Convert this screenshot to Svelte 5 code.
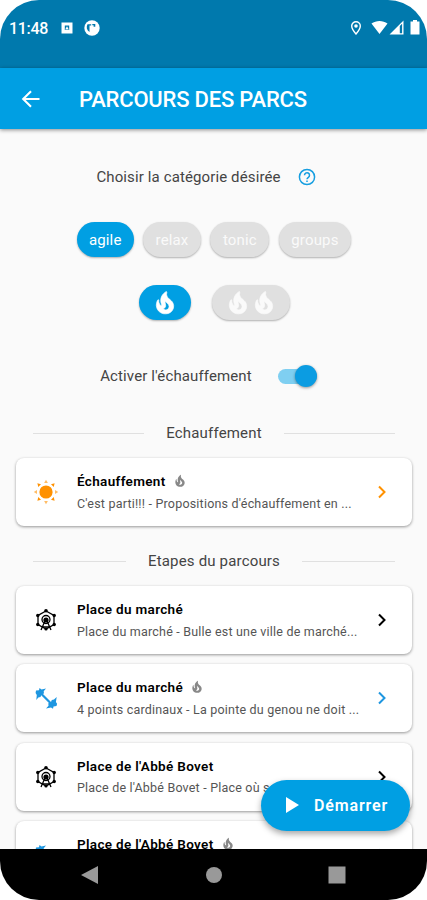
<script lang="ts">
  type Kind = "sun" | "wheel" | "dumbbell";

  type Step = {
    kind: Kind;
    title: string;
    text: string;
    fire: boolean;
  };

  const categories = ["agile", "relax", "tonic", "groups"];

  const warmup: Step[] = [
    { kind: "sun", title: "Échauffement", text: "C'est parti!!! - Propositions d'échauffement en ...", fire: true },
  ];

  const steps: Step[] = [
    { kind: "wheel", title: "Place du marché", text: "Place du marché - Bulle est une ville de marché...", fire: false },
    { kind: "dumbbell", title: "Place du marché", text: "4 points cardinaux - La pointe du genou ne doit ...", fire: true },
    { kind: "wheel", title: "Place de l'Abbé Bovet", text: "Place de l'Abbé Bovet - Place où se trouve la ...", fire: false },
    { kind: "dumbbell", title: "Place de l'Abbé Bovet", text: "", fire: true },
  ];

  let category = $state("agile");
  let level = $state(1);
  let warmupOn = $state(true);
</script>

{#snippet flame()}
  <svg class="flame" viewBox="0 0 24 24">
    <path d="M19.48 12.35c-1.57-4.08-7.16-4.3-5.81-10.23.1-.44-.37-.78-.75-.55C9.29 3.71 6.68 8 8.87 13.62c.18.46-.36.89-.75.59-1.81-1.37-2-3.34-1.84-4.75.06-.52-.62-.77-.91-.34C4.69 10.16 4 11.84 4 14.37c.38 5.6 5.11 7.32 6.81 7.54 2.43.31 5.06-.14 6.95-1.87 2.08-1.93 2.84-5.01 1.72-7.69zM10.2 17.38c1.44-.35 2.18-1.39 2.38-2.31.33-1.43-.96-2.83-.09-5.09.33 1.87 3.27 3.04 3.27 5.08.08 2.53-2.66 4.7-5.56 2.32z" />
  </svg>
{/snippet}

{#snippet stepIcon(kind: Kind)}
  <svg class="step-icon" viewBox="0 0 26 26">
    {#if kind === "sun"}
      <circle cx="13" cy="13" r="6.6" />
      {#each [0, 45, 90, 135, 180, 225, 270, 315] as angle}
        <path class:soft={angle % 90 === 0} d="M13 .8l1.9 3.200h-3.800z" transform="rotate({angle} 13 13)" />
      {/each}
    {:else if kind === "wheel"}
      <path class="line" d="M13 4l8 4.500v9L13 22l-8-4.500v-9z" />
      <circle class="line" cx="13" cy="12.500" r="4" />
      <circle cx="13" cy="13" r="2.600" />
      <path class="line" d="M12 14l-4 9M14 14l4 9M9.500 20h7" />
      <circle cx="13" cy="3.800" r="1.800" />
      <circle cx="4.800" cy="8.500" r="1.700" />
      <circle cx="21.200" cy="8.500" r="1.700" />
      <circle cx="4.800" cy="17.500" r="1.700" />
      <circle cx="21.200" cy="17.500" r="1.700" />
      <circle cx="13" cy="22" r="1.600" />
    {:else}
      <path class="bar" d="M7 7.500l12 12" />
      <path d="M3 5.500l3-.3L6.500 3l2 1.500L13 3.500l-2.300 2.700.3 2.300-2.500.7-1 2.800-2.200.5-2 2.500.500-5-1.200-2z" />
      <path d="M23.500 21l-3 .5-.5 2.300-2-1.300-5 1.100 2.500-2.900-.2-2.400 2.500-.7 1-2.700 2.200-.4 2.700-2.500-.8 5 1.200 1.800z" />
    {/if}
  </svg>
{/snippet}

{#snippet card(step: Step)}
  <button class="card {step.kind}">
    {@render stepIcon(step.kind)}
    <span class="card-body">
      <span class="card-title">
        {step.title}
        {#if step.fire}{@render flame()}{/if}
      </span>
      <span class="card-text">{step.text}</span>
    </span>
    <svg class="chevron" viewBox="0 0 10 14"><path d="M2 1.500L7.500 7 2 12.500" /></svg>
  </button>
{/snippet}

<div class="phone">
  <div class="status">
    <span class="time">11:48</span>
    <svg class="app-icon" viewBox="0 0 12 12">
      <path fill-rule="evenodd" d="M.5.5h11v11H.5zM3.800 3.500v4.500h4.400V3.500z" />
      <path d="M4.200 7.500L6 4.200l1.800 3.300z" />
    </svg>
    <svg class="app-round" viewBox="0 0 16 16">
      <circle cx="8" cy="8" r="7.700" />
      <path class="cut" d="M3.500 4.300h3.700v1.300H5.500v6.400A5.500 5.500 0 0 1 3.500 4.300zM8.300 4h3v2.800H9.600v-1.500H8.300z" />
    </svg>
    <span class="space"></span>
    <svg class="pin" viewBox="0 0 12 16">
      <path class="outline" d="M6 1.700a4.300 4.300 0 0 0-4.300 4.300C1.700 9 6 14 6 14s4.300-5 4.300-8A4.300 4.300 0 0 0 6 1.700z" />
      <circle cx="6" cy="6" r="1.800" />
    </svg>
    <svg class="wifi" viewBox="0 0 18 15"><path d="M.5 3.200C5.500-.4 12.500-.4 17.500 3.200L9 14.500z" /></svg>
    <svg class="signal" viewBox="0 0 15 15"><path fill-rule="evenodd" d="M.5 14.500L14.500.5v14zM10.800 6v7.200h2.300V3.700z" /></svg>
    <svg class="battery" viewBox="0 0 10 15"><path d="M3 0h4v1.500h2.500v13h-9v-13H3z" /></svg>
  </div>

  <header>
    <svg class="back" viewBox="0 0 20 20"><path d="M18.500 10H2.500M10 2.200L2.200 10l7.800 7.800" /></svg>
    <h1>PARCOURS DES PARCS</h1>
  </header>

  <main>
    <div class="choose">
      <span>Choisir la catégorie désirée</span>
      <svg class="help" viewBox="0 0 18 18">
        <circle cx="9" cy="9" r="7.600" />
        <path d="M6.500 7.300a2.500 2.500 0 1 1 3.900 2c-1 .7-1.400 1-1.400 2M9 12.500v1.500" />
      </svg>
    </div>

    <div class="chips">
      {#each categories as name}
        <button class="chip" class:active={category === name} onclick={() => (category = name)}>{name}</button>
      {/each}
    </div>

    <div class="levels">
      {#each [1, 2] as n}
        <button class="chip level" class:active={level === n} onclick={() => (level = n)}>
          {#each { length: n } as _}{@render flame()}{/each}
        </button>
      {/each}
    </div>

    <div class="toggle">
      <span>Activer l'échauffement</span>
      <button class="switch" class:on={warmupOn} aria-label="Activer l'échauffement" onclick={() => (warmupOn = !warmupOn)}>
        <span class="thumb"></span>
      </button>
    </div>

    <h2 class="first">Echauffement</h2>
    <div class="list">
      {#each warmup as step}{@render card(step)}{/each}
    </div>

    <h2>Etapes du parcours</h2>
    <div class="list">
      {#each steps as step}{@render card(step)}{/each}
    </div>
  </main>

  <button class="fab">
    <svg viewBox="0 0 13 16"><path d="M0 0l13 8-13 8z" /></svg>
    Démarrer
  </button>

  <nav>
    <svg viewBox="0 0 18 18"><path d="M17 0v18L0 9z" /></svg>
    <svg viewBox="0 0 18 18"><circle cx="9" cy="9" r="8" /></svg>
    <svg viewBox="0 0 18 18"><path d="M.5.5h17v17H.5z" /></svg>
  </nav>
</div>

<style>
  :global(body) {
    background: #fff;
  }

  .phone {
    position: relative;
    display: flex;
    flex-direction: column;
    width: 427px;
    height: 900px;
    overflow: hidden;
    border-radius: 39px;
    background: #fafafa;
    color: #444;
    font-family: Roboto, "Liberation Sans", sans-serif;
  }

  button {
    border: 0;
    padding: 0;
    font-family: inherit;
    cursor: pointer;
  }

  svg {
    display: block;
    flex: none;
    fill: currentColor;
  }

  .status {
    flex: none;
    display: flex;
    align-items: center;
    box-sizing: border-box;
    height: 68px;
    padding: 0 7px 13px 9px;
    background: #0079ad;
    color: #fff;
  }

  .time {
    width: 39px;
    padding-top: 1px;
    font-size: 16px;
    font-weight: 500;
    letter-spacing: -0.3px;
  }

  .app-icon { width: 12px; height: 12px; margin-left: 13px; }
  .app-round { width: 16px; height: 16px; margin-left: 11px; }
  .cut { fill: #0079ad; }
  .space { flex: 1; }
  .pin { width: 12px; height: 16px; margin-right: 9px; }
  .outline { fill: none; stroke: currentColor; stroke-width: 1.4; }
  .wifi { width: 17px; height: 15px; }
  .signal { width: 15px; height: 15px; margin: 0 6px 0 1px; }
  .battery { width: 10px; height: 15px; }

  header {
    position: relative;
    flex: none;
    display: flex;
    align-items: center;
    box-sizing: border-box;
    height: 61px;
    padding: 1px 0 0 21px;
    background: #009fe3;
    color: #fff;
    box-shadow: 0 1px 4px rgba(0, 0, 0, 0.45);
  }

  .back {
    width: 20px;
    height: 20px;
    margin-right: 38px;
    fill: none;
    stroke: currentColor;
    stroke-width: 2.1;
  }

  h1 {
    margin: 0;
    font-size: 22px;
    font-weight: 500;
    letter-spacing: -0.2px;
    white-space: nowrap;
  }

  main {
    flex: 1;
    min-height: 0;
    overflow: hidden;
    padding: 0 15px 0 16px;
  }

  .choose,
  .toggle {
    display: flex;
    align-items: center;
    justify-content: center;
    font-size: 15px;
    letter-spacing: 0.12px;
  }

  .choose {
    height: 26px;
    margin-top: 35px;
    gap: 17px;
    padding-right: 16px;
  }

  .help {
    width: 18px;
    height: 18px;
    color: #169ee0;
    fill: none;
    stroke: currentColor;
    stroke-width: 1.5;
  }

  .chips,
  .levels {
    display: flex;
    justify-content: center;
  }

  .chips {
    margin-top: 32px;
    gap: 9.5px;
  }

  .levels {
    margin-top: 28px;
    gap: 21px;
  }

  .chip {
    display: flex;
    align-items: center;
    justify-content: center;
    height: 35px;
    padding: 0 12px;
    border-radius: 18px;
    background: #e0e0e0;
    color: #fafafa;
    font-size: 15px;
    letter-spacing: 0.15px;
    box-shadow: 0 1px 2px rgba(0, 0, 0, 0.3);
  }

  .chips .chip:not(:first-child) {
    padding: 0 12.5px;
  }

  .chip.active {
    background: #009fe3;
    color: #fff;
  }

  .level {
    padding: 0 13px;
  }

  .level .flame {
    width: 26px;
    height: 26px;
    stroke: currentColor;
    stroke-width: 0.6;
  }

  .toggle {
    height: 26px;
    margin-top: 43px;
    gap: 26px;
    padding-right: 11px;
  }

  .switch {
    display: flex;
    align-items: center;
    width: 39px;
    height: 15px;
    border-radius: 8px;
    background: #bbb;
  }

  .switch.on {
    justify-content: flex-end;
    background: #7fcff1;
  }

  .thumb {
    flex: none;
    width: 22px;
    height: 22px;
    border-radius: 50%;
    background: #fff;
    box-shadow: 0 1px 3px rgba(0, 0, 0, 0.4);
  }

  .on .thumb {
    background: #0b9ce2;
  }

  h2 {
    display: flex;
    align-items: center;
    gap: 22px;
    height: 24px;
    margin: 23px 17px 13px;
    font-size: 15px;
    font-weight: 400;
    letter-spacing: 0.17px;
    white-space: nowrap;
  }

  h2::before,
  h2::after {
    content: "";
    flex: 1;
    height: 1px;
    background: #e0e0e0;
  }

  h2.first {
    margin-top: 32px;
  }

  .list {
    display: flex;
    flex-direction: column;
    gap: 10.3px;
  }

  .card {
    display: flex;
    align-items: center;
    box-sizing: border-box;
    height: 68px;
    padding: 0 25px 0 17px;
    border-radius: 8px;
    background: #fff;
    color: #000;
    text-align: left;
    box-shadow: 0 1px 3px rgba(0, 0, 0, 0.4);
  }

  .sun { color: #ff9100; }
  .dumbbell { color: #1e96e0; }
  .soft { opacity: 0.6; }

  .step-icon {
    width: 26px;
    height: 26px;
  }

  .line {
    fill: none;
    stroke: currentColor;
    stroke-width: 1.3;
  }

  .bar {
    stroke: currentColor;
    stroke-width: 2.2;
  }

  .card-body {
    flex: 1;
    min-width: 0;
    display: flex;
    flex-direction: column;
    gap: 4px;
    padding-left: 18px;
  }

  .card-title {
    display: flex;
    align-items: center;
    gap: 7px;
    height: 19px;
    color: #000;
    font-size: 13.5px;
    font-weight: 600;
    letter-spacing: 0.33px;
  }

  .card-title .flame {
    width: 14px;
    height: 14px;
    color: #888;
  }

  .card-text {
    height: 18px;
    line-height: 18px;
    color: #555;
    font-size: 12.5px;
    letter-spacing: 0.2px;
    white-space: nowrap;
  }

  .chevron {
    width: 10px;
    height: 14px;
    fill: none;
    stroke: currentColor;
    stroke-width: 2;
  }

  .fab {
    position: absolute;
    right: 17px;
    bottom: 69.5px;
    display: flex;
    align-items: center;
    gap: 15px;
    box-sizing: border-box;
    width: 149px;
    height: 51px;
    padding-left: 25px;
    border-radius: 26px;
    background: #009fe3;
    color: #fff;
    font-size: 16px;
    font-weight: 600;
    letter-spacing: 0.85px;
    box-shadow: 0 3px 6px rgba(0, 0, 0, 0.35);
  }

  .fab svg {
    width: 13px;
    height: 16px;
  }

  nav {
    position: relative;
    flex: none;
    display: flex;
    align-items: center;
    justify-content: space-between;
    box-sizing: border-box;
    height: 51px;
    padding: 0 81px 0 81px;
    background: #000;
    color: #999;
  }

  nav svg {
    width: 18px;
    height: 18px;
  }
</style>
